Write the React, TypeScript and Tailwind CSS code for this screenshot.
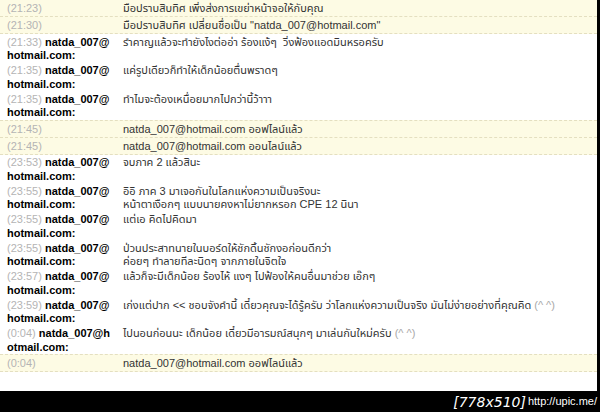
type Msg = {
  time: string;
  name?: [string, string];
  lines: string[];
  system?: boolean;
  top?: boolean;
};

const HOT: [string, string] = ['natda_007@', 'hotmail.com:'];

const messages: Msg[] = [
  { time: '(21:23)', system: true, lines: ['มือปราบสิบทิศ เพิ่งส่งการเขย่าหน้าจอให้กับคุณ'] },
  { time: '(21:30)', system: true, lines: ['มือปราบสิบทิศ เปลี่ยนชื่อเป็น "natda_007@hotmail.com"'] },
  { time: '(21:33)', name: HOT, lines: ['รำคาญแล้วจะทำยังไงต่ออ่า ร้องแง้ๆ  วิ่งฟ้องแอดมินหรอครับ'] },
  { time: '(21:35)', name: HOT, lines: ['แค่รูปเดียวก็ทำให้เด็กน้อยตื่นพราดๆ'] },
  { time: '(21:35)', name: HOT, lines: ['ทำไมจะต้องเหนื่อยมากไปกว่านี้ว้าาา'] },
  { time: '(21:45)', system: true, top: true, lines: ['natda_007@hotmail.com ออฟไลน์แล้ว'] },
  { time: '(21:45)', system: true, lines: ['natda_007@hotmail.com ออนไลน์แล้ว'] },
  { time: '(23:53)', name: HOT, lines: ['จบภาค 2 แล้วสินะ'] },
  {
    time: '(23:55)',
    name: HOT,
    lines: ['อิอิ ภาค 3 มาเจอกันในโลกแห่งความเป็นจริงนะ', 'หน้าตาเงือกๆ แบบนายคงหาไม่ยากหรอก CPE 12 นินา'],
  },
  { time: '(23:55)', name: HOT, lines: ['แต่เอ คิดไปคิดมา'] },
  {
    time: '(23:55)',
    name: HOT,
    lines: ['ป่วนประสาทนายในบอร์ดให้ชักดิ้นชักงอก่อนดีกว่า', 'ค่อยๆ ทำลายทีละนิดๆ จากภายในจิตใจ'],
  },
  { time: '(23:57)', name: HOT, lines: ['แล้วก็จะมีเด็กน้อย ร้องไห้ แงๆ ไปฟ้องให้คนอื่นมาช่วย เอ๊กๆ'] },
  {
    time: '(23:59)',
    name: HOT,
    lines: ['เก่งแต่ปาก << ชอบจังคำนี้ เดี๋ยวคุณจะได้รู้ครับ ว่าโลกแห่งความเป็นจริง มันไม่ง่ายอย่างที่คุณคิด |(^ ^)'],
  },
  {
    time: '(0:04)',
    name: ['natda_007@h', 'otmail.com:'],
    lines: ['ไปนอนก่อนนะ เด็กน้อย เดี๋ยวมีอารมณ์สนุกๆ มาเล่นกันใหม่ครับ |(^ ^)'],
  },
  { time: '(0:04)', system: true, top: true, lines: ['natda_007@hotmail.com ออฟไลน์แล้ว'] },
];

// "|" marks where the grey emoticon starts
function Line({ text }: { text: string }) {
  const [body, emo] = text.split('|');
  return (
    <div className="whitespace-pre">
      {body}
      {emo && <span className="text-[#a8a8a8]">{emo}</span>}
    </div>
  );
}

function Row({ m }: { m: Msg }) {
  if (m.system) {
    return (
      <div
        className={`flex bg-[#fdfbe4] leading-[16px] border-b border-dashed border-[#e4dfc0] ${
          m.top ? 'border-t' : ''
        }`}
      >
        <div className="w-[123px] shrink-0 pl-[7px] text-[#b4b4b4]">{m.time}</div>
        <div className="flex-1 text-[#333]">
          <Line text={m.lines[0]} />
        </div>
      </div>
    );
  }

  return (
    <div className="flex pt-[1.5px] leading-[13.5px]">
      <div className="w-[123px] shrink-0 pl-[7px]">
        <div className="whitespace-pre">
          <span className="text-[#b4b4b4]">{m.time} </span>
          <span className="font-bold text-black">{m.name?.[0]}</span>
        </div>
        <div className="font-bold text-black">{m.name?.[1]}</div>
      </div>
      <div className="flex-1 text-[#333]">
        {m.lines.map((l, i) => (
          <Line key={i} text={l} />
        ))}
      </div>
    </div>
  );
}

export default function App() {
  return (
    <div className="w-[600px] h-[412px] bg-black flex flex-col overflow-hidden">
      <div
        className="w-[597px] h-[391px] bg-white overflow-hidden text-[11px]"
        style={{ fontFamily: 'Tahoma, "Liberation Sans", "Noto Sans Thai", "Noto Sans", sans-serif' }}
      >
        {messages.map((m, i) => (
          <Row key={i} m={m} />
        ))}
      </div>

      {/* watermark */}
      <div className="flex-1 flex items-center justify-end pr-[3px] text-white">
        <span className="italic text-[14px] leading-none" style={{ fontFamily: '"DejaVu Sans", sans-serif' }}>
          [778x510]
        </span>
        <span className="ml-[2px] text-[11px] leading-none" style={{ fontFamily: '"Liberation Sans", sans-serif' }}>
          http://upic.me/
        </span>
      </div>
    </div>
  );
}
